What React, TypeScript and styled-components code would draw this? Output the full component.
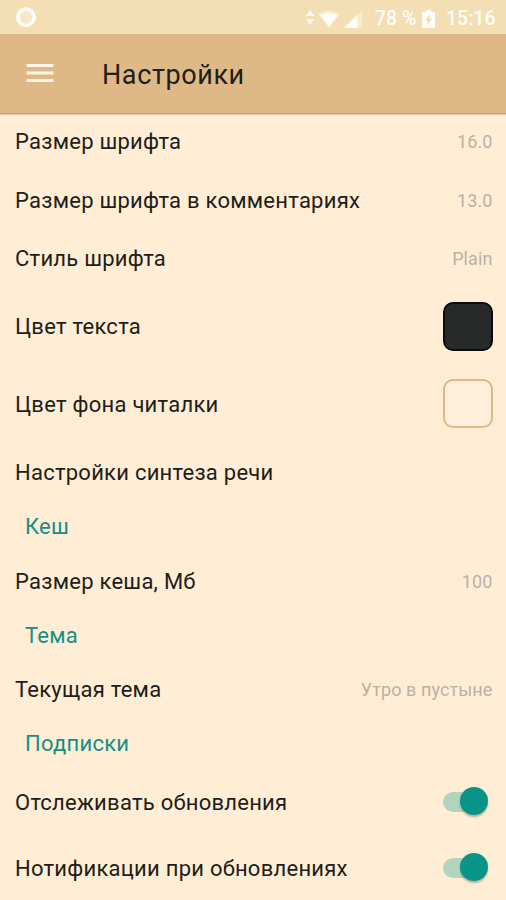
import React from "react";
import styled, { createGlobalStyle } from "styled-components";

const GlobalStyle = createGlobalStyle`
  * { box-sizing: border-box; }
  body { margin: 0; background: #ffeed5; overflow: hidden; }
`;

const Screen = styled.div`
  width: 506px;
  height: 900px;
  display: flex;
  flex-direction: column;
  overflow: hidden;
  background: #ffeed5;
  color: #211d18;
  font-family: Roboto, "Noto Sans", sans-serif;
`;

const StatusBar = styled.header`
  height: 34px;
  flex: none;
  display: flex;
  align-items: center;
  justify-content: space-between;
  padding: 0 10px 0 15px;
  background: #f4deb3;
  color: #fffdf8;
`;

const StatusGroup = styled.div`
  display: flex;
  align-items: center;
  height: 34px;
  padding-top: 3px;
`;

const StatusText = styled.span<{ $width: number; $gap: number }>`
  width: ${(p) => p.$width}px;
  margin-left: ${(p) => p.$gap}px;
  font-size: 19.5px;
  font-weight: 500;
  line-height: 32px;
  white-space: nowrap;
`;

const StatusIcon = styled.svg<{ $gap?: number }>`
  display: block;
  flex: none;
  margin-left: ${(p) => p.$gap ?? 0}px;
`;

const AppBar = styled.div`
  height: 80px;
  flex: none;
  display: flex;
  align-items: center;
  padding: 0 26px;
  background: #deb887;
  border-bottom: 1px solid #b5a488;
  box-shadow: 0 1px 1px rgba(120, 110, 90, 0.25);
`;

const MenuButton = styled.button`
  width: 28px;
  height: 20px;
  margin: 0 48px 1px 0;
  padding: 0;
  display: flex;
  border: 0;
  background: none;
  color: #fff6ea;
`;

const Title = styled.h1`
  margin: 0;
  padding-top: 2px;
  font-size: 27px;
  font-weight: 400;
  line-height: 36px;
  letter-spacing: 0.6px;
`;

const List = styled.main`
  display: flex;
  flex-direction: column;
  margin-top: -1px;
`;

const Row = styled.div<{ $height: number }>`
  height: ${(p) => p.$height}px;
  flex: none;
  display: flex;
  align-items: center;
  justify-content: space-between;
  padding: 0 14px 0 15px;
`;

const Label = styled.span`
  font-size: 22px;
  line-height: 28px;
  letter-spacing: 0.25px;
  white-space: nowrap;
`;

const Value = styled.span`
  font-size: 18px;
  line-height: 24px;
  letter-spacing: 0.1px;
  margin-right: -0.5px;
  color: #bbb0a6;
  white-space: nowrap;
`;

const SectionTitle = styled.h2`
  height: 50.5px;
  flex: none;
  display: flex;
  align-items: center;
  margin: 0;
  padding: 0 0 1px 25px;
  font-size: 22px;
  font-weight: 400;
  letter-spacing: 0.25px;
  color: #159085;
`;

const Swatch = styled.button<{ $fill: string; $edge: string }>`
  width: 50px;
  height: 49px;
  margin: -2px -1px 0 0;
  padding: 0;
  border: 2px solid ${(p) => p.$edge};
  border-radius: 10px;
  background: ${(p) => p.$fill};
`;

const Track = styled.span`
  width: 36px;
  height: 20px;
  margin: -2px 13px 0 0;
  display: flex;
  align-items: center;
  background: #b0d5bc;
  border-radius: 10px;
`;

const Thumb = styled.span`
  width: 28px;
  height: 28px;
  flex: none;
  margin: -1px 0 0 17px;
  border-radius: 50%;
  background: #089587;
  box-shadow: 0 2px 2px rgba(60, 60, 40, 0.35);
`;

const Switch = () => (
  <Track role="switch" aria-checked="true">
    <Thumb />
  </Track>
);

export default function App() {
  return (
    <>
      <GlobalStyle />
      <Screen>
        <StatusBar>
          <StatusIcon width="22" height="22" viewBox="0 0 22 22">
            <circle cx="11" cy="11.3" r="8.2" fill="#f8e8ca" stroke="currentColor" strokeWidth="3.6" />
          </StatusIcon>
          <StatusGroup>
            <StatusIcon width="8" height="17" viewBox="0 0 8 17" fill="currentColor">
              <path d="M4 0 8 6H0ZM0 9h8l-4 6Z" />
            </StatusIcon>
            <StatusIcon $gap={4} width="22" height="17" viewBox="0 0 22 17">
              <path d="M0 3.5Q11-2.5 22 3.5L11 17Z" fill="currentColor" opacity="0.45" />
              <path d="M2 5.5Q11 0.5 20 5.5L11 17Z" fill="currentColor" />
            </StatusIcon>
            <StatusIcon $gap={4} width="18" height="18" viewBox="0 0 18 18" fill="currentColor">
              <path d="M18 0v18H0Z" opacity="0.4" />
              <path d="M13.5 4.5V18H0Z" />
            </StatusIcon>
            <StatusText $gap={13} $width={41}>78 %</StatusText>
            <StatusIcon $gap={6} width="13" height="18" viewBox="0 0 13 18">
              <path d="M1 2h3V0h5v2h3a1 1 0 0 1 1 1v14a1 1 0 0 1-1 1H1a1 1 0 0 1-1-1V3a1 1 0 0 1 1-1Z" fill="currentColor" />
              <path d="M8 4 3.5 10.5h3l-1.5 5 5-7H7Z" fill="#eed7ac" />
            </StatusIcon>
            <StatusText $gap={11} $width={50}>15:16</StatusText>
          </StatusGroup>
        </StatusBar>

        <AppBar>
          <MenuButton aria-label="Меню">
            <svg width="28" height="20" viewBox="0 0 28 20" stroke="currentColor" strokeWidth="3.2">
              <path d="M0.5 2.5h27M0.5 10h27M0.5 17.5h27" />
            </svg>
          </MenuButton>
          <Title>Настройки</Title>
        </AppBar>

        <List>
          <Row $height={58.5}><Label>Размер шрифта</Label><Value>16.0</Value></Row>
          <Row $height={58.5}><Label>Размер шрифта в комментариях</Label><Value>13.0</Value></Row>
          <Row $height={58.5}><Label>Стиль шрифта</Label><Value>Plain</Value></Row>
          <Row $height={77.5}><Label>Цвет текста</Label><Swatch $fill="#272828" $edge="#0b0c0e" aria-label="Цвет текста" /></Row>
          <Row $height={77.5}><Label>Цвет фона читалки</Label><Swatch $fill="#ffeed9" $edge="#deb887" aria-label="Цвет фона" /></Row>
          <Row $height={58.5}><Label>Настройки синтеза речи</Label></Row>
          <SectionTitle>Кеш</SectionTitle>
          <Row $height={58}><Label>Размер кеша, Мб</Label><Value>100</Value></Row>
          <SectionTitle>Тема</SectionTitle>
          <Row $height={58}><Label>Текущая тема</Label><Value>Утро в пустыне</Value></Row>
          <SectionTitle>Подписки</SectionTitle>
          <Row $height={66}><Label>Отслеживать обновления</Label><Switch /></Row>
          <Row $height={66}><Label>Нотификации при обновлениях</Label><Switch /></Row>
        </List>
      </Screen>
    </>
  );
}
